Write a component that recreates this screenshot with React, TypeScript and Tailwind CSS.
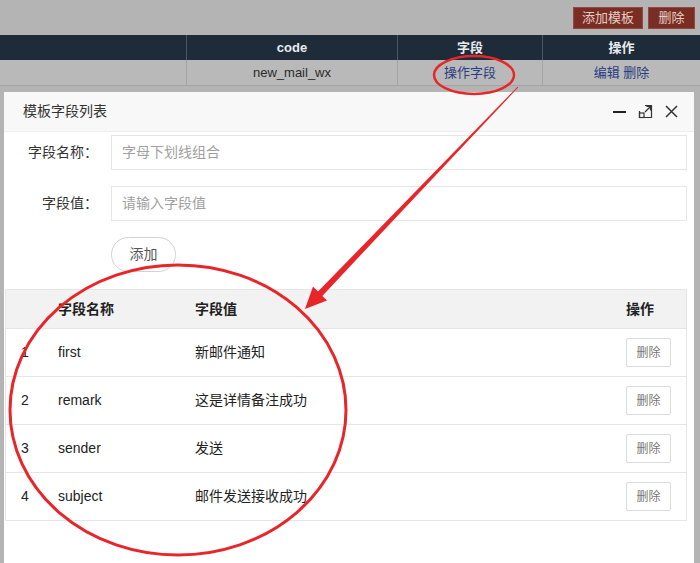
import React from 'react';

interface FieldRow {
    name: string;
    value: string;
}

const rows: FieldRow[] = [
    { name: 'first', value: '新邮件通知' },
    { name: 'remark', value: '这是详情备注成功' },
    { name: 'sender', value: '发送' },
    { name: 'subject', value: '邮件发送接收成功' },
];

const font = { fontFamily: '"Liberation Sans", "Noto Sans CJK SC", sans-serif' };

const App: React.FC = () => {
    return (
        <div className="relative w-[700px] h-[563px] overflow-hidden bg-[#b4b4b4]" style={font}>
            {/* toolbar */}
            <div className="h-[35px] flex justify-end items-start pt-[7px] pr-[5px] gap-[5px]">
                <button className="h-[22px] w-[70px] bg-[#7a2d22] border border-[#8e4a40] text-[13px] text-[#e3cdc7]">添加模板</button>
                <button className="h-[22px] w-[47px] bg-[#7a2d22] border border-[#8e4a40] text-[13px] text-[#e3cdc7]">删除</button>
            </div>

            {/* background table */}
            <div className="grid grid-cols-[187px_211px_145px_1fr] h-[25px] bg-[#1e2c3a] text-[13px] font-bold text-[#e8ecef]">
                <div className="border-r border-[#4a5663]" />
                <div className="border-r border-[#4a5663] flex items-center justify-center">code</div>
                <div className="border-r border-[#4a5663] flex items-center justify-center">字段</div>
                <div className="flex items-center justify-center">操作</div>
            </div>
            <div className="grid grid-cols-[187px_211px_145px_1fr] h-[26px] bg-[#b9b9b9] text-[13px] text-[#2b2b2b] border-b border-[#a5a5a5]">
                <div className="border-r border-[#a5a5a5]" />
                <div className="border-r border-[#a5a5a5] flex items-center justify-center">new_mail_wx</div>
                <div className="border-r border-[#a5a5a5] flex items-center justify-center text-[#2a3d82]">操作字段</div>
                <div className="flex items-center justify-center text-[#2a3d82]">编辑 删除</div>
            </div>

            {/* dialog */}
            <div className="absolute left-[4px] top-[92px] w-[690px] bottom-0 bg-white flex flex-col">
                <div className="h-[40px] shrink-0 bg-[#f8f8f8] border-b border-[#eeeeee] flex items-center pl-[19px] pr-[15px]">
                    <span className="text-[14px] text-[#333333]">模板字段列表</span>
                    <div className="ml-auto flex items-center gap-[11px]">
                        <svg width="15" height="15" viewBox="0 0 15 15">
                            <line x1="1" y1="8" x2="14" y2="8" stroke="#222" strokeWidth="2" />
                        </svg>
                        <svg width="15" height="15" viewBox="0 0 15 15" fill="none" stroke="#333" strokeWidth="1.2">
                            <path d="M7 1.5 H13.5 V13.5 H1.5 V7" />
                            <rect x="1.5" y="9" width="4.5" height="4.5" />
                            <path d="M7 8 L12.5 2.5 M8.5 2.5 H12.5 V6.5" />
                        </svg>
                        <svg width="15" height="15" viewBox="0 0 15 15" fill="none" stroke="#333" strokeWidth="1.5">
                            <path d="M2 2 L13 13 M13 2 L2 13" />
                        </svg>
                    </div>
                </div>

                <div className="pt-[3px] pr-[7px] flex flex-col">
                    <div className="flex items-center">
                        <label className="w-[94px] text-right text-[14px] text-[#333]">字段名称：</label>
                        <div className="ml-[13px] flex-1 h-[35px] border border-[#e6e6e6] flex items-center pl-[10px] text-[14px] text-[#a0a0a0]">字母下划线组合</div>
                    </div>
                    <div className="flex items-center mt-[16px]">
                        <label className="w-[94px] text-right text-[14px] text-[#333]">字段值：</label>
                        <div className="ml-[13px] flex-1 h-[35px] border border-[#e6e6e6] flex items-center pl-[10px] text-[14px] text-[#a0a0a0]">请输入字段值</div>
                    </div>
                    <div className="mt-[16px] ml-[107px]">
                        <button className="h-[35px] w-[65px] rounded-full border border-[#d2d2d2] bg-white text-[14px] text-[#555]">添加</button>
                    </div>
                </div>

                <div className="mt-[17px] ml-[1px] mr-[7px] border border-[#e6e6e6] text-[14px] text-[#222]">
                    <div className="grid grid-cols-[47px_137px_1fr_65px] h-[38px] bg-[#f2f2f2] font-bold items-center">
                        <div />
                        <div className="pl-[5px]">字段名称</div>
                        <div className="pl-[5px]">字段值</div>
                        <div className="pl-[5px]">操作</div>
                    </div>
                    {rows.map((row, i) => (
                        <div key={row.name} className="grid grid-cols-[47px_137px_1fr_65px] h-[48px] items-center border-t border-[#e6e6e6]">
                            <div className="pl-[15px]">{i + 1}</div>
                            <div className="pl-[5px]">{row.name}</div>
                            <div className="pl-[5px]">{row.value}</div>
                            <div className="pl-[5px]">
                                <button className="h-[29px] w-[45px] border border-[#dcdcdc] rounded-[2px] bg-white text-[12px] text-[#777]">删除</button>
                            </div>
                        </div>
                    ))}
                </div>
            </div>

            {/* red annotations */}
            <svg className="absolute inset-0 pointer-events-none" width="700" height="563" viewBox="0 0 700 563">
                <ellipse cx="474" cy="75" rx="40" ry="19" fill="none" stroke="#e8262a" strokeWidth="2.5" />
                <polygon
                    points="517.6,86.7 518.4,87.3 322.3,295.9 327,300.5 305,309 313,286.5 318,291.5"
                    fill="#e8262a"
                />
                <ellipse cx="178" cy="410" rx="168" ry="145" fill="none" stroke="#e8262a" strokeWidth="3" />
            </svg>
        </div>
    );
};

export default App;
